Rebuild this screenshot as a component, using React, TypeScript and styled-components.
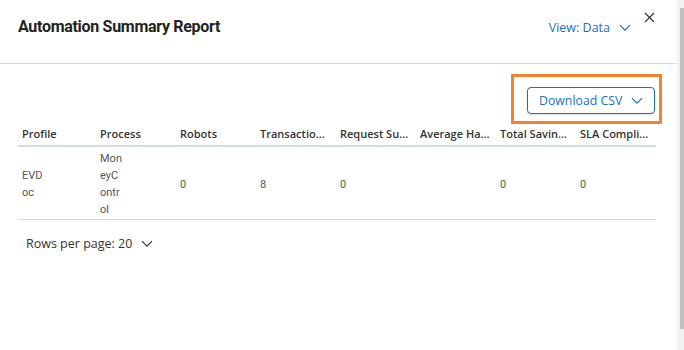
import React from "react";
import styled, { createGlobalStyle } from "styled-components";

const Global = createGlobalStyle`
  html, body { margin: 0; padding: 0; background: #fff; overflow: hidden; }
  body { font-family: "Open Sans", "Liberation Sans", sans-serif; }
`;

const Frame = styled.div`
  display: flex;
  width: 684px;
  height: 350px;
`;

const Panel = styled.div`
  flex: 1;
  display: flex;
  flex-direction: column;
  min-width: 0;
`;

const ScrollTrack = styled.div`
  width: 7px;
  background: #f1f1f1;
  display: flex;
  justify-content: flex-end;
  padding: 8px 0 21px;
  box-sizing: border-box;
`;

const ScrollThumb = styled.div`
  width: 4px;
  height: 100%;
  background: #c1c1c1;
`;

const Header = styled.div`
  height: 64px;
  box-sizing: border-box;
  border-bottom: 1px solid #d3dae6;
  display: flex;
  align-items: flex-start;
  padding: 0 21px 0 18px;
`;

const Title = styled.h1`
  margin: 17px 0 0;
  font-family: Roboto, "Liberation Sans", sans-serif;
  font-weight: 700;
  font-size: 16px;
  line-height: 20px;
  color: #222;
  flex: 1;
  letter-spacing: -0.3px;
`;

const ViewSelect = styled.div`
  margin-top: 19px;
  display: flex;
  align-items: center;
  gap: 9px;
  color: #1b6fbd;
  font-size: 12.5px;
  line-height: 18px;
`;

const CloseBtn = styled.div`
  margin: 12px 0 0 13px;
  width: 12px;
  height: 12px;
  display: flex;
  color: #333;
`;

const Toolbar = styled.div`
  display: flex;
  justify-content: flex-end;
  padding: 10px 15px 0 0;
`;

const Highlight = styled.div`
  border: 3px solid #f5822b;
  padding: 10px 4px 7px 13px;
`;

const DownloadButton = styled.button`
  width: 128px;
  height: 27px;
  box-sizing: border-box;
  border: 1px solid #1b6fbd;
  border-radius: 4px;
  background: #fff;
  color: #1b6fbd;
  font-family: "Open Sans", "Liberation Sans", sans-serif;
  font-size: 12.3px;
  display: flex;
  align-items: center;
  justify-content: space-between;
  padding: 0 11px 0 11px;
  box-shadow: 0 1px 2px rgba(0, 0, 0, 0.12);
`;

const Table = styled.div`
  margin: 0 0 0 18px;
  display: grid;
  grid-template-columns: 78px repeat(7, 80px);
`;

const HeadCell = styled.div`
  font-family: "Open Sans", "Liberation Sans", sans-serif;
  font-weight: 600;
  font-size: 11px;
  color: #333;
  padding: 1px 2px 2px 4px;
  height: 18px;
  line-height: 18px;
  white-space: nowrap;
  overflow: hidden;
  text-overflow: ellipsis;
  border-bottom: 2px solid #d3dae6;
`;

const Cell = styled.div`
  font-family: Roboto, "Liberation Sans", sans-serif;
  font-size: 11px;
  color: #555;
  line-height: 17px;
  padding: 3px 4px 1px;
  border-bottom: 1px solid #d3dae6;
  display: flex;
  align-items: center;
`;

const Wrap = styled.span`
  width: 24px;
  word-break: break-all;
`;

const Footer = styled.div`
  display: flex;
  align-items: center;
  gap: 9px;
  padding: 15px 0 0 26px;
  font-size: 12.5px;
  color: #333;
  line-height: 18px;
`;

const Chevron = ({ size = 12, color = "currentColor" }: { size?: number; color?: string }) => (
  <svg width={size} height={size * 0.6} viewBox="0 0 12 7" fill="none">
    <path d="M1 1l5 5 5-5" stroke={color} strokeWidth="1.2" />
  </svg>
);

const headers = [
  "Profile",
  "Process",
  "Robots",
  "Transactio...",
  "Request Su...",
  "Average Ha...",
  "Total Savin...",
  "SLA Compli...",
];

const row: { v: string; wrap?: boolean }[] = [
  { v: "EVDoc", wrap: true },
  { v: "MoneyControl", wrap: true },
  { v: "0" },
  { v: "8" },
  { v: "0" },
  { v: "" },
  { v: "0" },
  { v: "0" },
];

export default function App() {
  return (
    <>
      <Global />
      <Frame>
        <Panel>
          <Header>
            <Title>Automation Summary Report</Title>
            <ViewSelect>
              View: Data <Chevron />
            </ViewSelect>
            <CloseBtn>
              <svg width="11" height="11" viewBox="0 0 11 11">
                <path d="M1 1l9 9M10 1l-9 9" stroke="#333" strokeWidth="1.2" />
              </svg>
            </CloseBtn>
          </Header>
          <Toolbar>
            <Highlight>
              <DownloadButton>
                Download CSV <Chevron />
              </DownloadButton>
            </Highlight>
          </Toolbar>
          <Table>
            {headers.map((h) => (
              <HeadCell key={h}>{h}</HeadCell>
            ))}
            {row.map((c, i) => (
              <Cell key={i}>{c.wrap ? <Wrap>{c.v}</Wrap> : c.v}</Cell>
            ))}
          </Table>
          <Footer>
            Rows per page: 20 <Chevron />
          </Footer>
        </Panel>
        <ScrollTrack>
          <ScrollThumb />
        </ScrollTrack>
      </Frame>
    </>
  );
}
